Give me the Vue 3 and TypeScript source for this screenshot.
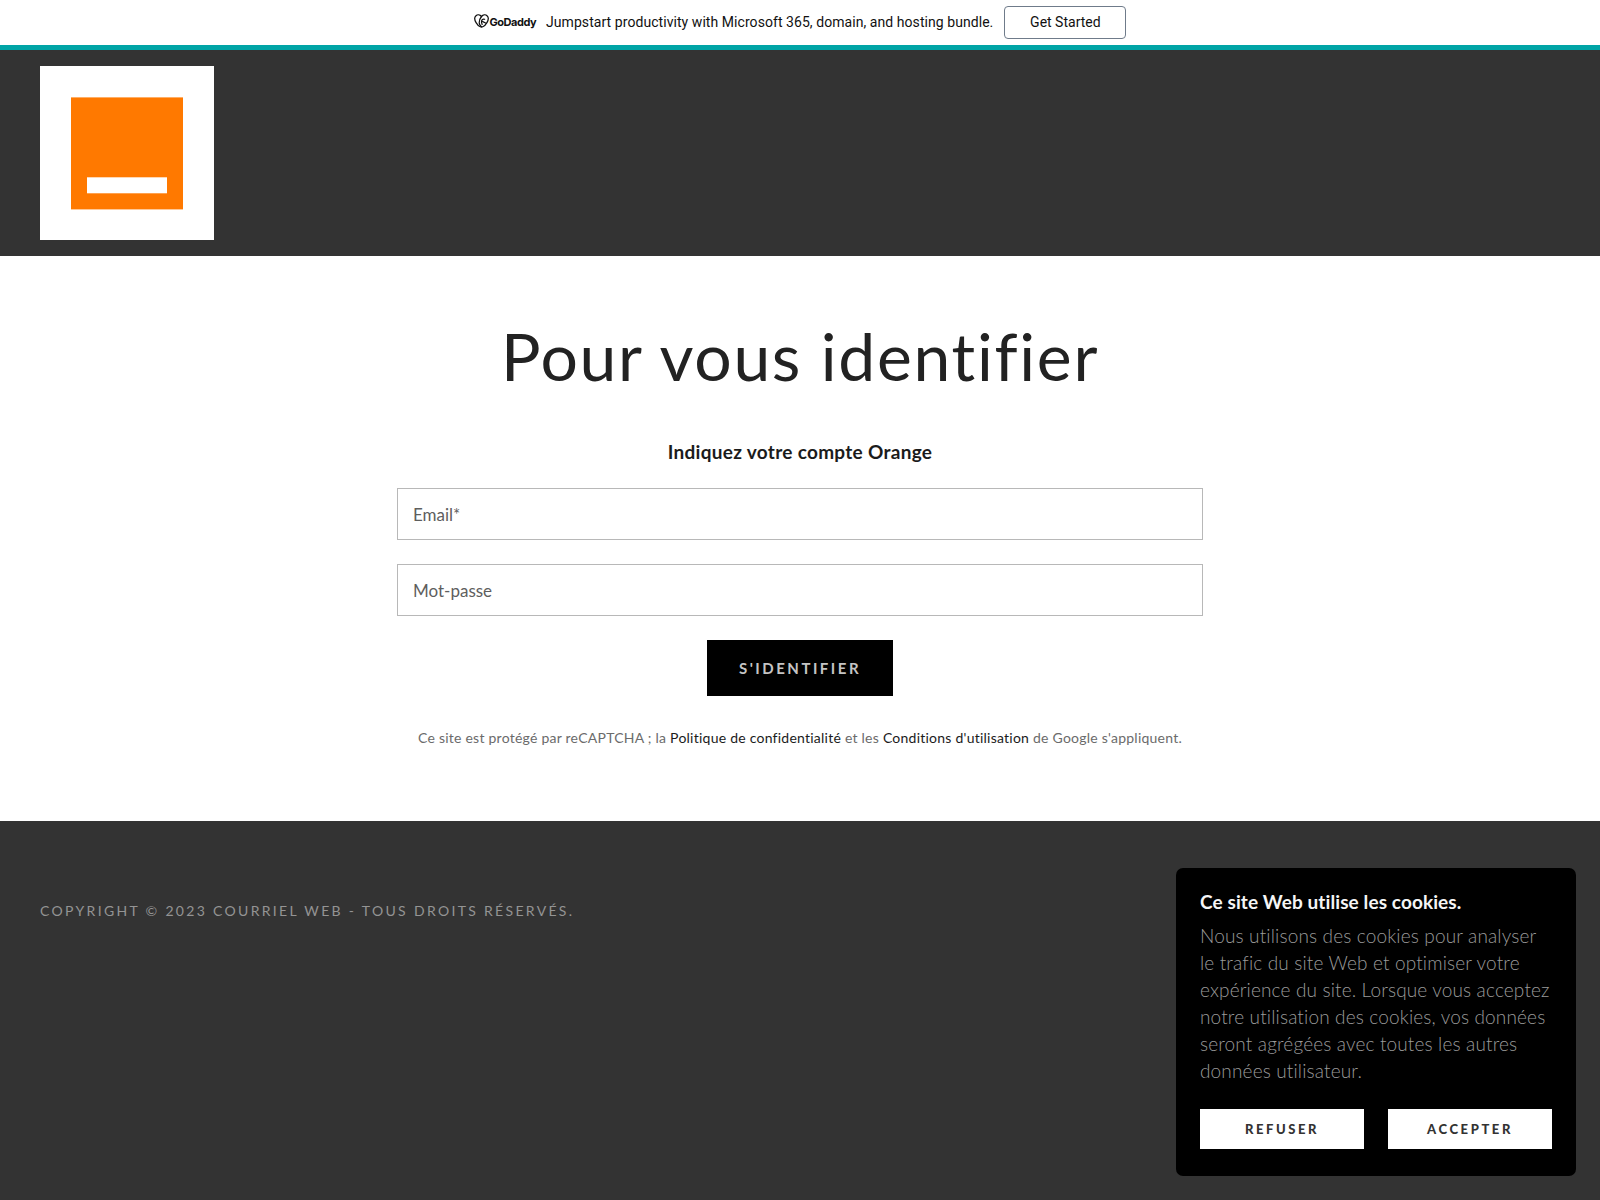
<script setup lang="ts">
const cookieLines = [
  'Nous utilisons des cookies pour analyser',
  'le trafic du site Web et optimiser votre',
  'expérience du site. Lorsque vous acceptez',
  'notre utilisation des cookies, vos données',
  'seront agrégées avec toutes les autres',
  'données utilisateur.',
]
</script>

<template>
  <div class="page">
    <div class="promo">
      <svg class="gd-mark" viewBox="0 0 24 22" width="15" height="14" aria-hidden="true">
        <path
          d="M12 3.800C9.500 1 5.500.5 3.200 2.500.6 4.800.9 9.500 3.300 13.500c1.800 3 4.500 5.900 6.700 6.700 1.300.5 2.700.5 4 0 2.200-.8 4.900-3.700 6.700-6.700 2.400-4 2.700-8.700.1-11C18.500.5 14.500 1 12 3.800Z"
          fill="none"
          stroke="#111"
          stroke-width="2"
        />
        <path
          d="M12 3.800C9.800 6.500 8 10.500 8.300 14c.2 2.600 1.800 4.500 3.700 6.500M17 8.200c-2-.7-3.800 0-4.600 1.800-.8 1.800-.6 4 .6 6.500M14 12l4.500 2.200"
          fill="none"
          stroke="#111"
          stroke-width="2"
          stroke-linecap="round"
        />
      </svg>
      <span class="gd-name">GoDaddy</span>
      <span class="promo-text">Jumpstart productivity with Microsoft 365, domain, and hosting bundle.</span>
      <a class="promo-btn">Get Started</a>
    </div>

    <header class="header">
      <svg class="logo" viewBox="0 0 174 174" width="174" height="174" aria-label="Orange">
        <rect width="174" height="174" fill="#fff" />
        <rect x="31" y="31.400" width="112" height="112" fill="#ff7900" />
        <rect x="47" y="111.300" width="80" height="16" fill="#fff" />
      </svg>
    </header>

    <main class="main">
      <h1>Pour vous identifier</h1>
      <h4>Indiquez votre compte Orange</h4>
      <form class="form" @submit.prevent>
        <input type="email" placeholder="Email*" />
        <input type="password" placeholder="Mot-passe" />
        <button type="submit" class="submit">S'IDENTIFIER</button>
      </form>
      <p class="recaptcha">
        Ce site est protégé par reCAPTCHA ; la <a>Politique de confidentialité</a> et les
        <a>Conditions d'utilisation</a> de Google s'appliquent.
      </p>
    </main>

    <footer class="footer">
      <p class="copyright">Copyright © 2023 Courriel Web - Tous droits réservés.</p>
    </footer>

    <aside class="cookie">
      <h4>Ce site Web utilise les cookies.</h4>
      <p>
        <template v-for="line in cookieLines" :key="line">{{ line }}<br /></template>
      </p>
      <div class="cookie-actions">
        <button type="button">REFUSER</button>
        <button type="button">ACCEPTER</button>
      </div>
    </aside>
  </div>
</template>

<style>
html,
body {
  margin: 0;
  background: #fff;
}
</style>

<style scoped>
.page {
  min-height: 1200px;
  display: flex;
  flex-direction: column;
  font-family: Lato, 'Open Sans', sans-serif;
}

/* --- promo bar --- */
.promo {
  height: 45px;
  border-bottom: 5px solid #00a4a6;
  box-sizing: content-box;
  display: flex;
  align-items: center;
  justify-content: center;
  font-family: Roboto, sans-serif;
  color: #111;
}

.gd-mark {
  margin-right: 1px;
  margin-bottom: 3px;
}

.gd-name {
  font-family: Inter, sans-serif;
  font-size: 11px;
  font-weight: 700;
  letter-spacing: -0.5px;
  margin-right: 10px;
  margin-bottom: 2px;
}

.promo-text {
  font-size: 14px;
  letter-spacing: 0.06px;
  margin-bottom: 2px;
}

.promo-btn {
  margin-left: 11px;
  width: 120px;
  height: 31px;
  display: flex;
  align-items: center;
  justify-content: center;
  border: 1px solid #6f7b8a;
  border-radius: 4px;
  font-size: 14px;
  margin-bottom: 1px;
}

/* --- header --- */
.header {
  background: #333;
  padding: 16px 40px;
  display: flex;
}

/* --- main --- */
.main {
  flex: 0 0 565px;
  box-sizing: border-box;
  padding-top: 59px;
  display: flex;
  flex-direction: column;
  align-items: center;
  background: #fff;
}

h1 {
  margin: 0;
  font-size: 66px;
  line-height: 82px;
  font-weight: 400;
  letter-spacing: 1.7px;
  color: #222;
}

.main h4 {
  margin: 43px 0 24px;
  font-size: 19px;
  line-height: 24px;
  font-weight: 700;
  letter-spacing: 0.3px;
  color: #1b1b1b;
}

.form {
  width: 806px;
  display: flex;
  flex-direction: column;
  align-items: center;
  gap: 24px;
}

.form input {
  width: 100%;
  height: 52px;
  box-sizing: border-box;
  border: 1px solid #b8b8b8;
  padding: 0 15px;
  font-family: inherit;
  font-size: 17px;
  background: #fff;
  outline: none;
}

.form input::placeholder {
  color: #5e5e5e;
  opacity: 1;
}

.submit {
  width: 186px;
  height: 56px;
  border: none;
  background: #000;
  color: #c4c4c4;
  font-family: inherit;
  font-size: 15px;
  font-weight: 700;
  letter-spacing: 2.5px;
}

.recaptcha {
  margin: 33px 0 0;
  font-size: 14px;
  line-height: 18px;
  letter-spacing: 0.24px;
  color: #6b6b6b;
}

.recaptcha a {
  color: #1b1b1b;
}

/* --- footer --- */
.footer {
  flex: 1;
  background: #333;
  padding: 80px 40px 0;
}

.copyright {
  margin: 0;
  font-size: 14px;
  line-height: 20px;
  letter-spacing: 2.32px;
  text-transform: uppercase;
  color: #949494;
}

/* --- cookie banner --- */
.cookie {
  position: fixed;
  right: 24px;
  bottom: 24px;
  width: 400px;
  box-sizing: border-box;
  padding: 24px 24px 27px;
  background: #000;
  border-radius: 7px;
}

.cookie h4 {
  margin: 0 0 10px;
  font-size: 19px;
  line-height: 20px;
  font-weight: 700;
  letter-spacing: 0.1px;
  color: #f5f5f5;
}

.cookie p {
  margin: 0;
  font-size: 19px;
  line-height: 27px;
  font-weight: 300;
  letter-spacing: 0.15px;
  color: #9a9a9a;
  white-space: nowrap;
}

.cookie-actions {
  margin-top: 25px;
  display: flex;
  gap: 24px;
}

.cookie-actions button {
  flex: 1;
  height: 40px;
  border: none;
  background: #fff;
  color: #333;
  font-family: inherit;
  font-size: 13px;
  font-weight: 900;
  letter-spacing: 2.6px;
}
</style>
